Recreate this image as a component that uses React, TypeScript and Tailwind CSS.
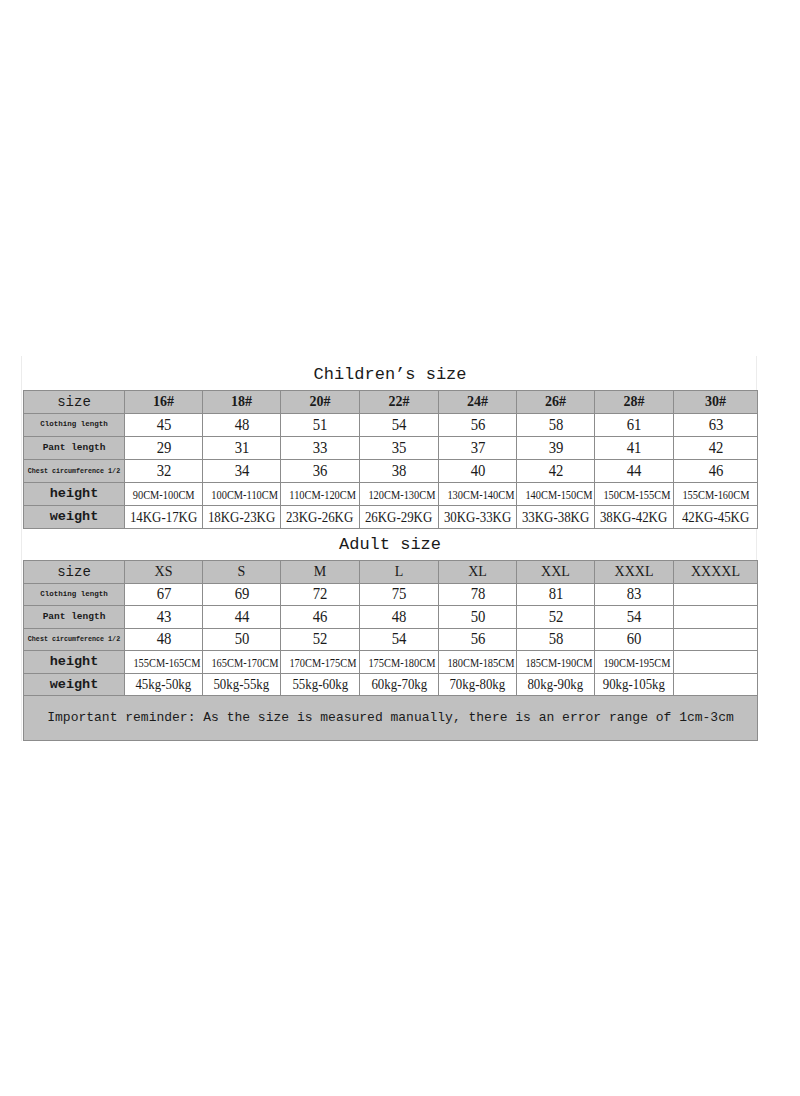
import React from "react";

const mono = "font-['Liberation_Mono',monospace]";
const serif = "font-['Liberation_Serif',serif]";

type Row = { label: React.ReactNode; cells: string[]; kind: "num" | "range" | "kg" };

const LabelCell: React.FC<{ children: React.ReactNode; className?: string }> = ({ children, className }) => (
  <td className={`border border-[#8c8c8c] bg-[#c0c0c0] text-center whitespace-nowrap ${mono} ${className ?? ""}`}>
    {children}
  </td>
);

const SizeTable: React.FC<{ header: string[]; rows: Row[]; rowH: string; reminder?: boolean }> = ({
  header,
  rows,
  rowH,
  reminder,
}) => (
  <table className="w-[734px] table-fixed border-collapse text-[#1a1a1a]">
    <colgroup>
      <col className="w-[101px]" />
      <col className="w-[78px]" />
      <col className="w-[78px]" />
      <col className="w-[79px]" />
      <col className="w-[79px]" />
      <col className="w-[78px]" />
      <col className="w-[78px]" />
      <col className="w-[79px]" />
      <col className="w-[84px]" />
    </colgroup>
    <tbody>
      <tr className={rowH}>
        <LabelCell className="text-[14px] leading-none">size</LabelCell>
        {header.map((h, i) => (
          <td
            key={i}
            className={`border border-[#8c8c8c] bg-[#c0c0c0] text-center text-[14px] leading-none ${serif} ${h.includes("#") ? "font-bold" : ""}`}
          >
            {h}
          </td>
        ))}
      </tr>
      {rows.map((r, ri) => (
        <tr key={ri} className={rowH}>
          {r.label}
          {r.cells.map((c, ci) => (
            <td
              key={ci}
              className={`border border-[#8c8c8c] bg-white p-0 text-center whitespace-nowrap leading-none ${serif}`}
            >
              {r.kind === "num" && <span className="inline-block scale-x-[0.92] text-[16px]">{c}</span>}
              {r.kind === "range" && <span className="inline-block scale-x-[0.8] text-[13px]">{c}</span>}
              {r.kind === "kg" && <span className="inline-block scale-x-[0.92] text-[14px]">{c}</span>}
            </td>
          ))}
        </tr>
      ))}
      {reminder && (
        <tr className="h-[45px]">
          <td
            colSpan={9}
            className={`border border-[#8c8c8c] bg-[#c0c0c0] text-center text-[13px] ${mono}`}
          >
            Important reminder: As the size is measured manually, there is an error range of 1cm-3cm
          </td>
        </tr>
      )}
    </tbody>
  </table>
);

const labels = {
  clothing: <LabelCell className="text-[7.5px] font-bold leading-none">Clothing length</LabelCell>,
  pant: <LabelCell className="text-[9.5px] font-bold leading-none">Pant length</LabelCell>,
  chest: <LabelCell className="text-[6.7px] font-bold leading-none">Chest circumference 1/2</LabelCell>,
  height: <LabelCell className="text-[13.5px] font-bold leading-none">height</LabelCell>,
  weight: <LabelCell className="text-[13.5px] font-bold leading-none">weight</LabelCell>,
};

const childRows: Row[] = [
  { label: labels.clothing, cells: ["45", "48", "51", "54", "56", "58", "61", "63"], kind: "num" },
  { label: labels.pant, cells: ["29", "31", "33", "35", "37", "39", "41", "42"], kind: "num" },
  { label: labels.chest, cells: ["32", "34", "36", "38", "40", "42", "44", "46"], kind: "num" },
  {
    label: labels.height,
    cells: [
      "90CM-100CM",
      "100CM-110CM",
      "110CM-120CM",
      "120CM-130CM",
      "130CM-140CM",
      "140CM-150CM",
      "150CM-155CM",
      "155CM-160CM",
    ],
    kind: "range",
  },
  {
    label: labels.weight,
    cells: ["14KG-17KG", "18KG-23KG", "23KG-26KG", "26KG-29KG", "30KG-33KG", "33KG-38KG", "38KG-42KG", "42KG-45KG"],
    kind: "kg",
  },
];

const adultRows: Row[] = [
  { label: labels.clothing, cells: ["67", "69", "72", "75", "78", "81", "83", ""], kind: "num" },
  { label: labels.pant, cells: ["43", "44", "46", "48", "50", "52", "54", ""], kind: "num" },
  { label: labels.chest, cells: ["48", "50", "52", "54", "56", "58", "60", ""], kind: "num" },
  {
    label: labels.height,
    cells: [
      "155CM-165CM",
      "165CM-170CM",
      "170CM-175CM",
      "175CM-180CM",
      "180CM-185CM",
      "185CM-190CM",
      "190CM-195CM",
      "",
    ],
    kind: "range",
  },
  {
    label: labels.weight,
    cells: ["45kg-50kg", "50kg-55kg", "55kg-60kg", "60kg-70kg", "70kg-80kg", "80kg-90kg", "90kg-105kg", ""],
    kind: "kg",
  },
];

export default function App() {
  return (
    <div className="h-[1096px] w-[800px] bg-white pt-[356px]">
      <div className="ml-[21px] w-[736px] border-x border-[#ececec] px-px">
        <div className={`flex h-[34px] items-end justify-center pb-[3px] pl-[2px] text-[17px] text-[#1a1a1a] ${mono}`}>
          Children’s size
        </div>
        <SizeTable
          header={["16#", "18#", "20#", "22#", "24#", "26#", "28#", "30#"]}
          rows={childRows}
          rowH="h-[23px]"
        />
        <div className={`flex h-[31px] items-center justify-center pl-[2px] text-[17px] text-[#1a1a1a] ${mono}`}>
          Adult size
        </div>
        <SizeTable
          header={["XS", "S", "M", "L", "XL", "XXL", "XXXL", "XXXXL"]}
          rows={adultRows}
          rowH="h-[22.5px]"
          reminder
        />
      </div>
    </div>
  );
}
